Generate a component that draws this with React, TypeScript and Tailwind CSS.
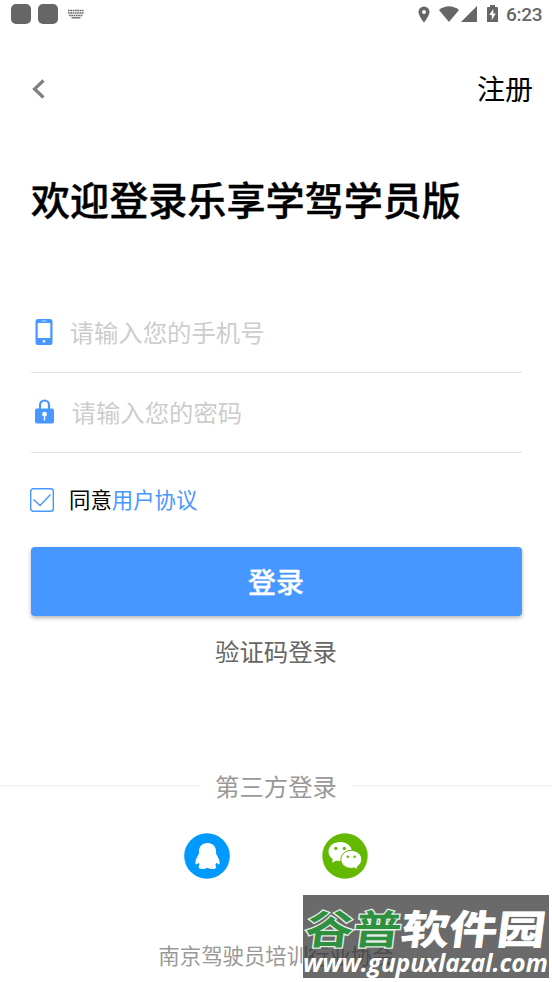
import React from 'react';

const StatusBar: React.FC = () => (
  <div className="flex h-7 items-center justify-between pl-[11px] pr-[10px] text-[#666666]">
    <div className="flex items-center">
      <span className="h-5 w-5 rounded-[5px] bg-[#666666]" />
      <span className="ml-[7px] h-5 w-5 rounded-[5px] bg-[#666666]" />
      <svg className="ml-[10px]" width="16" height="10" viewBox="0 0 16 10" stroke="currentColor" fill="none">
        <path d="M0 1.5h16M0 4h16M1 6.5h14" strokeWidth="1.6" strokeDasharray="1.7 0.6" />
        <path d="M3.5 8.8h9" strokeWidth="1.3" />
      </svg>
    </div>
    <div className="flex items-center">
      <svg width="12" height="17" viewBox="0 0 12 17" fill="currentColor">
        <path fillRule="evenodd" d="M6 0.5a5.5 5.5 0 0 0-5.5 5.5C.5 10 6 16.5 6 16.5S11.5 10 11.5 6A5.5 5.5 0 0 0 6 .5Zm0 3.6a1.9 1.9 0 1 1 0 3.8 1.9 1.9 0 0 1 0-3.8Z" />
      </svg>
      <svg className="ml-[9px]" width="20" height="17" viewBox="0 0 20 17" fill="currentColor">
        <path d="M0 4Q10-3.5 20 4L10 16Z" />
      </svg>
      <svg className="ml-[2px]" width="16" height="17" viewBox="0 0 16 17" fill="currentColor">
        <path d="M16 0v16H0Z" />
      </svg>
      <svg className="ml-[10px]" width="11" height="18" viewBox="0 0 11 18" fill="currentColor">
        <path fillRule="evenodd" d="M3 0h5v2h2a1 1 0 0 1 1 1v14H0V3a1 1 0 0 1 1-1h2ZM6.3 4 2.2 10h2.6v5l4-6.5H6.3Z" />
      </svg>
      <span className="ml-2 mt-px w-[36px] font-['Roboto',sans-serif] text-[19px] font-medium leading-7 tracking-[-0.3px]">6:23</span>
    </div>
  </div>
);

const PhoneIcon = () => (
  <svg width="18" height="26" viewBox="0 0 18 26">
    <rect x="0.5" width="17" height="26" rx="2.5" fill="#4697ff" />
    <rect x="2.7" y="4" width="12.6" height="15" fill="#fff" />
    <path d="M6.5 2h5" stroke="#b5d6ff" />
    <circle cx="9" cy="22.3" r="1.2" fill="#fff" />
  </svg>
);

const LockIcon = () => (
  <svg className="-mt-px" width="19" height="25" viewBox="0 0 19 25">
    <path d="M5 11V6a4.5 4.5 0 0 1 9 0v5" fill="none" stroke="#4697ff" strokeWidth="2.2" />
    <rect y="9.5" width="19" height="15" rx="2" fill="#4697ff" />
    <circle cx="9.5" cy="15.2" r="2.4" fill="#fff" />
    <path d="M9.5 16v5" stroke="#fff" strokeWidth="1.4" strokeLinecap="round" />
  </svg>
);

const QQIcon = () => (
  <svg width="46" height="46" viewBox="0 0 46 46">
    <circle cx="23" cy="23" r="22.8" fill="#0099ff" />
    <path
      fill="#fff"
      d="M23.5 10c-5.5 0-8.6 4-8.6 8.5v2.3c-1.7 2.8-3.5 6-3.5 8.9 0 1.9.8 2 1.7 1.2l1.500-1.200c.2 1 .6 1.700 1.100 2.300-1.700 1.300-1.300 4 1.700 4 2.500 0 4.600-.3 6-1.200 1.400.9 3.500 1.200 6 1.200 3 0 3.500-2.700 1.800-4 .5-.6.9-1.300 1.100-2.300l1.600 1.200c.9.8 1.700.7 1.700-1.200 0-2.900-1.800-6.100-3.500-8.900v-2.300c0-4.500-3.100-8.500-8.600-8.500Z"
    />
    <path d="M17 25h13v9H17z" fill="#fff" />
  </svg>
);

const WechatIcon = () => (
  <svg width="46" height="46" viewBox="0 0 46 46">
    <circle cx="23" cy="23" r="22.7" fill="#62b900" />
    <path d="M18.2 9C11.5 9 6.5 13.2 6.5 18.7c0 3.2 1.8 5.7 4.3 7.5l-.8 3.5 4.5-2.2c1.2.4 2.4.6 3.7.6 6.700 0 11.700-4.200 11.700-9.500S24.900 9 18.200 9Z" fill="#fff" />
    <path d="M29.3 17.4c-5.6 0-10.400 3.700-10.400 9s4.800 9 10.400 9c1.200 0 2.200-.2 3.200-.5l3.600 1.700-.8-2.900c2.700-1.700 4.400-4.200 4.400-7.300 0-5.300-4.800-9-10.400-9Z" fill="#fff" stroke="#62b900" strokeWidth="1" />
    <g fill="#62b900">
      <circle cx="13.8" cy="15.4" r="1.6" />
      <circle cx="22.3" cy="15.4" r="1.6" />
      <circle cx="25.8" cy="23.7" r="1.3" />
      <circle cx="32.7" cy="23.7" r="1.3" />
    </g>
  </svg>
);

const Watermark = () => (
  <div className="absolute left-[303px] top-[895px] h-[83px] w-[246px] bg-[#2b2b2b]/70 text-white">
    <div className="mt-[9px] flex h-[46px] origin-center -skew-x-6 scale-y-[0.83] items-center whitespace-nowrap pl-[3px] text-[48px] font-bold leading-[46px]">
      <span className="text-[#2f9140] [-webkit-text-stroke:3px_#e5eee6] [paint-order:stroke_fill]">谷普</span>
      <span className="[-webkit-text-stroke:1px_#fff]">软件园</span>
    </div>
    <div className="-mt-[3px] w-[250px] origin-left scale-x-[0.977] whitespace-nowrap font-['Open_Sans','Noto_Sans',sans-serif] text-[25px] font-bold italic leading-[30px]">
      www.gupuxlazal.com
    </div>
  </div>
);

const fields = [
  { icon: <PhoneIcon />, placeholder: '请输入您的手机号', offset: 'ml-[17px]' },
  { icon: <LockIcon />, placeholder: '请输入您的密码', offset: 'ml-[18px]' },
];

export default function App() {
  return (
    <div className="relative h-[982px] w-[552px] overflow-hidden bg-white font-['Noto_Sans_CJK_SC',sans-serif] text-black">
      <StatusBar />

      <header className="flex h-[122px] items-center justify-between pl-8 pr-[19px]">
        <svg width="13" height="20" viewBox="0 0 13 20" fill="none" stroke="#7d8085" strokeWidth="3.2">
          <path d="M11.5 1.5 2.5 10l9 8.5" />
        </svg>
        <span className="pb-0.5 text-[28px] leading-10">注册</span>
      </header>

      <h1 className="h-[142px] pl-[31px] text-[39.1px] font-medium leading-[96px] [-webkit-text-stroke:0.4px_#000]">
        欢迎登录乐享学驾学员版
      </h1>

      <main className="ml-[30.5px] w-[491px]">
        {fields.map((field) => (
          <div key={field.placeholder} className="flex h-[80.5px] items-center border-b border-[#e2e2e2] pl-1">
            {field.icon}
            <span className={`${field.offset} text-[24.4px] leading-9 text-[#cdcdcd]`}>{field.placeholder}</span>
          </div>
        ))}

        <div className="flex h-[93px] items-center text-[21.4px] leading-8">
          <svg className="-ml-[0.5px]" width="24" height="24" viewBox="0 0 24 24" fill="none" stroke="#4697ff" strokeWidth="1.4">
            <rect x="0.7" y="0.7" width="22.6" height="22.6" rx="2.5" />
            <path d="M3.5 11.5 10 17.5 20.5 6.5" />
          </svg>
          <span className="ml-[15px] pb-0.5">同意</span>
          <span className="pb-0.5 text-[#4697ff]">用户协议</span>
        </div>

        <button className="mt-px block h-[69px] w-full rounded bg-[#4697ff] text-[28px] font-medium leading-[69px] text-white shadow-[0_2px_4px_rgba(0,0,0,0.3)] [-webkit-text-stroke:0.3px_#fff]">
          登录
        </button>
        <div className="h-[134px] text-center text-[24.4px] leading-[70px] text-[#666666]">验证码登录</div>
      </main>

      <div className="flex h-[72px] items-center gap-[15px]">
        <span className="h-0.5 flex-1 bg-[#f5f5f5]" />
        <span className="text-[24.4px] leading-9 text-[#999999]">第三方登录</span>
        <span className="h-0.5 flex-1 bg-[#f5f5f5]" />
      </div>

      <div className="mt-[11px] flex justify-center gap-[92px]">
        <QQIcon />
        <WechatIcon />
      </div>

      <footer className="mt-[58px] text-center text-[21.4px] leading-9 text-[#999999]">南京驾驶员培训行业协会</footer>

      <Watermark />
    </div>
  );
}
